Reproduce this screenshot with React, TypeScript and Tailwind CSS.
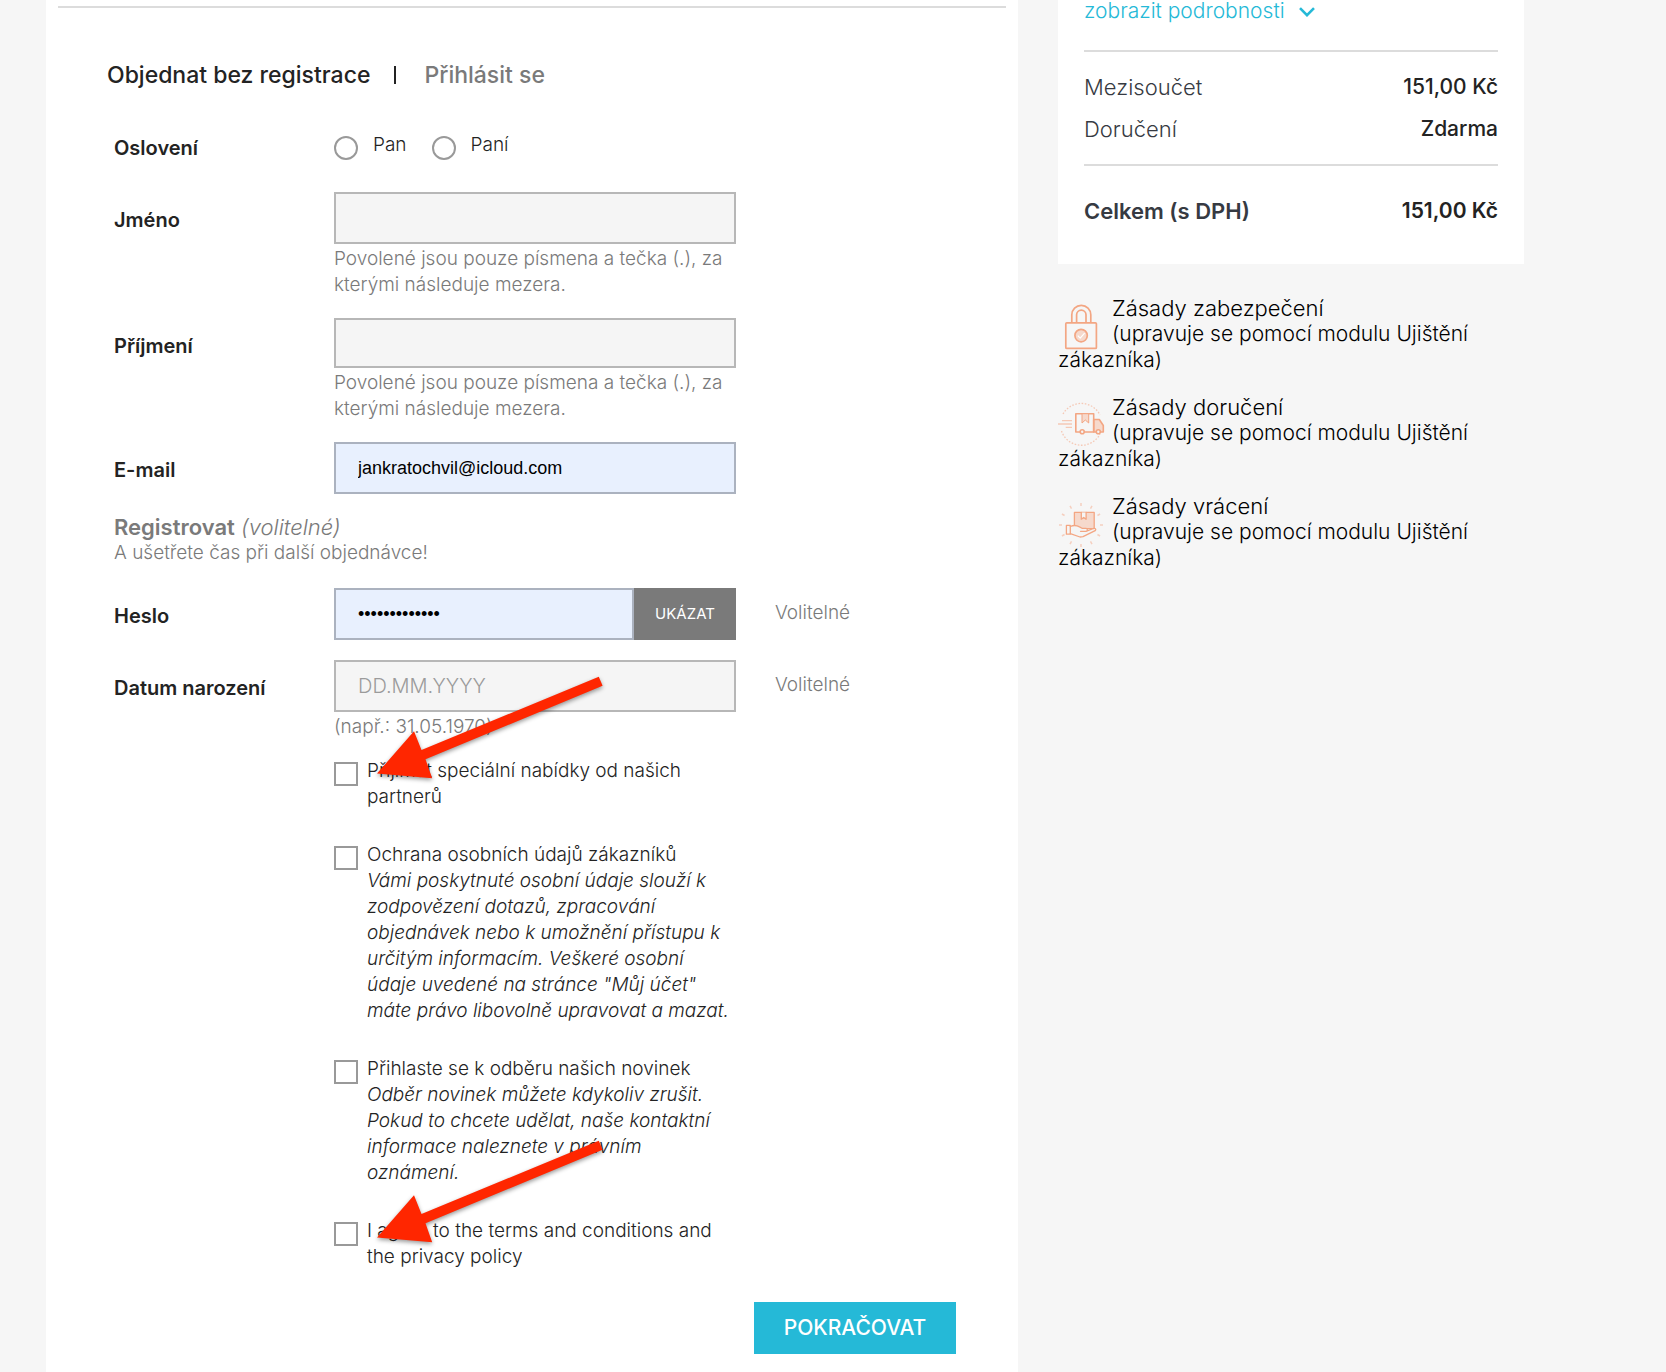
import { useState, type ReactNode } from 'react'

const FIELD = 'block w-full border-2 border-[#b7b7b7] bg-[#f5f5f5] px-[22px] text-[#232323] outline-none'
const FILLED = 'border-2 border-[#abb2bf] bg-[#e8f0fe] px-[22px] font-["Liberation_Sans",sans-serif] text-[18px] text-black outline-none'

function Row({ label, htmlFor, comment, children }: { label: string; htmlFor?: string; comment?: string; children: ReactNode }) {
  return (
    <div className="grid grid-cols-[220px_402fr_220fr] leading-[26px]">
      <label htmlFor={htmlFor} className="pt-[15px] text-[20px] font-semibold text-[#232323]">
        {label}
      </label>
      <div>{children}</div>
      {comment && <div className="pt-3 pl-[39px] text-[19px] font-light text-[#7a7a7a]">{comment}</div>}
    </div>
  )
}

function Hint({ children }: { children: ReactNode }) {
  return <p className="pt-[2px] text-[19px] font-light text-[#7a7a7a]">{children}</p>
}

function Arrow({ className }: { className: string }) {
  return (
    <svg
      viewBox="0 0 226 103"
      aria-hidden="true"
      className={`pointer-events-none absolute left-[43px] h-[103px] w-[226px] overflow-visible drop-shadow-[0_2px_2px_rgba(0,0,0,0.4)] ${className}`}
    >
      <path d="M0 97.5 37 55.3 44.5 74 221.8.7 225.6 9.8 48.5 83.3 55.2 102.3Z" fill="#ff2600" />
    </svg>
  )
}

function Check({ title, note, children }: { title: string; note?: string; children?: ReactNode }) {
  return (
    <div className="relative">
      <label className="flex gap-[9px] text-[19px] leading-[26px] font-light text-[#232323]">
        <input type="checkbox" className="mt-1 size-6 shrink-0 appearance-none border-2 border-[#999] bg-white checked:bg-[#232323]" />
        <span>
          {title}
          {note && <em className="block">{note}</em>}
        </span>
      </label>
      {children}
    </div>
  )
}

function LockIcon() {
  return (
    <g fill="none" stroke="#f3a683" strokeWidth="1.7" strokeLinejoin="round">
      <rect x="7.8" y="23.8" width="30.6" height="25.6" rx="1" />
      <path d="M13.8 23.8v-8a9.5 9.5 0 0 1 19 0v8M18.6 23.8v-8a4.7 4.7 0 0 1 9.4 0v8" />
      <circle cx="23.1" cy="36.6" r="6.2" fill="#f6d9cc" />
      <path d="m19.8 36.6 2.4 2.6 4.4-5" stroke="#fff" strokeWidth="1.2" />
    </g>
  )
}

function TruckIcon() {
  return (
    <g fill="none" stroke="#f3a683" strokeWidth="1.6" strokeLinejoin="round">
      <g stroke="#f5c9b6" strokeWidth="1.3">
        <path d="M5 16a21 21 0 0 1 37 1M3.500 33a21 21 0 0 0 38.500 3" strokeDasharray="1.6 1.6" />
        <path d="M4 22.700h10M0 26h14M7.700 29.300H14" />
      </g>
      <path d="M35.700 21.500h5.600l4 6V34h-9.600z" fill="#f6d9cc" />
      <path d="M17.800 15.700h17.900V34H17.800z" />
      <path d="M24 15.700v9.300l3.300-3 3.400 3v-9.300z" fill="#f6d9cc" strokeWidth="1" />
      <circle cx="24.2" cy="33.8" r="2" fill="#f5f5f5" />
      <circle cx="40.3" cy="33.8" r="2" fill="#f5f5f5" />
    </g>
  )
}

function HandIcon() {
  return (
    <g fill="none" stroke="#f3a683" strokeWidth="1.3" strokeLinejoin="round" strokeLinecap="round">
      <g stroke="#f5cfbf" strokeWidth="1.5" strokeLinecap="butt">
        {[0, 30, 60, 90, 120, 150, 180, 210, 240, 270, 300, 330].map((deg) => (
          <path key={deg} d="M23 6v3" transform={`rotate(${deg} 23 28)`} />
        ))}
      </g>
      <path d="M16.400 15.400h19.800v16.200H16.400z" fill="#f6d9cc" />
      <path d="M23.300 15.400v6.800l2.400-1.800 2.400 1.800v-6.800" fill="#f5f5f5" />
      <path
        d="M12.300 29.500c4-1.800 6.200-1.400 9.200.4l2.500 1.400h4c1.800 0 1.800 3 0 3h-5.500H28l7.500-2.800c1.800-.5 3 1 1.700 2.200L25 39.700l-3 .3-9.700-3.400"
        fill="#f5f5f5"
      />
      <path d="M8.400 28.400h3.900v8.800H8.400z" />
    </g>
  )
}

const policies = [
  { title: 'Zásady zabezpečení', icon: <LockIcon /> },
  { title: 'Zásady doručení', icon: <TruckIcon /> },
  { title: 'Zásady vrácení', icon: <HandIcon /> },
]

function SummaryLine({ label, value }: { label: string; value: string }) {
  return (
    <div className="flex justify-between leading-[42px]">
      <span className="text-[22px] font-light text-[#363a42]">{label}</span>
      <span className="font-medium text-[#232323]">{value}</span>
    </div>
  )
}

export default function App() {
  const [email, setEmail] = useState('jankratochvil@icloud.com')
  const [password, setPassword] = useState('heslo12345678')
  const [visible, setVisible] = useState(false)

  return (
    <div className='grid min-h-screen grid-cols-[972fr_466fr] gap-10 bg-[#f6f6f6] pr-[142px] pl-[46px] font-["Inter",sans-serif]'>
      <main className="bg-white px-3 pt-[6px]">
        <div className="h-[2px] bg-[#dcdcdc]" />

        <div className="flex items-center pt-[52px] pl-[49px] text-[23px] leading-[30px] font-medium">
          <a href="#guest" className="text-[#232323]">Objednat bez registrace</a>
          <span className="mr-7 ml-6 h-[18px] w-[2px] bg-[#232323]" />
          <a href="#login" className="text-[#7a7a7a]">Přihlásit se</a>
        </div>

        <form className="pt-[42px] pr-[50px] pl-[56px]" onSubmit={(e) => e.preventDefault()}>
          <fieldset className="grid grid-cols-[220px_1fr] text-[19px] leading-[26px]">
            <legend className="contents text-[20px] font-semibold text-[#232323]">
              <span className="pt-[3px]">Oslovení</span>
            </legend>
            <div className="flex gap-[25px] font-light text-[#232323]">
              {['Pan', 'Paní'].map((name) => (
                <label key={name} className="flex gap-[15px]">
                  <input
                    type="radio"
                    name="gender"
                    className="mt-[4px] size-6 appearance-none rounded-full border-2 border-[#999] bg-white checked:border-8"
                  />
                  {name}
                </label>
              ))}
            </div>
          </fieldset>

          <div className="mt-[31px] space-y-5">
            <Row label="Jméno" htmlFor="firstname">
              <input id="firstname" className={`${FIELD} h-[52px]`} />
              <Hint>Povolené jsou pouze písmena a tečka (.), za kterými následuje mezera.</Hint>
            </Row>
            <Row label="Příjmení" htmlFor="lastname">
              <input id="lastname" className={`${FIELD} h-[50px]`} />
              <Hint>Povolené jsou pouze písmena a tečka (.), za kterými následuje mezera.</Hint>
            </Row>
            <Row label="E-mail" htmlFor="email">
              <input id="email" type="email" value={email} onChange={(e) => setEmail(e.target.value)} className={`${FILLED} block h-[52px] w-full`} />
            </Row>
          </div>

          <div className="pt-5 pb-[22px] leading-[26px] text-[#7a7a7a]">
            <p className="text-[22px]">
              <span className="font-semibold">Registrovat</span> <em className="font-light">(volitelné)</em>
            </p>
            <p className="text-[19px] font-light">A ušetřete čas při další objednávce!</p>
          </div>

          <div className="space-y-5">
            <Row label="Heslo" htmlFor="password" comment="Volitelné">
              <div className="flex">
                <input
                  id="password"
                  type={visible ? 'text' : 'password'}
                  value={password}
                  onChange={(e) => setPassword(e.target.value)}
                  className={`${FILLED} h-[52px] min-w-0 flex-1`}
                />
                <button type="button" onClick={() => setVisible(!visible)} className="w-[102px] bg-[#7a7a7a] text-[15px] text-white">
                  UKÁZAT
                </button>
              </div>
            </Row>
            <Row label="Datum narození" htmlFor="birthday" comment="Volitelné">
              <input id="birthday" placeholder="DD.MM.YYYY" className={`${FIELD} h-[52px] text-[20px] font-light placeholder:text-[#9b9b9b]`} />
              <Hint>(např.: 31.05.1970)</Hint>
            </Row>
          </div>

          <div className="grid grid-cols-[402fr_220fr] pt-[18px] pl-[220px]">
            <div className="space-y-8">
              <Check title="Přijímat speciální nabídky od našich partnerů">
                <Arrow className="top-[-82px]" />
              </Check>
              <Check
                title="Ochrana osobních údajů zákazníků"
                note={'Vámi poskytnuté osobní údaje slouží k zodpovězení dotazů, zpracování objednávek nebo k umožnění přístupu k určitým informacím. Veškeré osobní údaje uvedené na stránce "Můj účet" máte právo libovolně upravovat a mazat.'}
              />
              <Check
                title="Přihlaste se k odběru našich novinek"
                note="Odběr novinek můžete kdykoliv zrušit. Pokud to chcete udělat, naše kontaktní informace naleznete v právním oznámení."
              />
              <Check title="I agree to the terms and conditions and the privacy policy">
                <Arrow className="top-[-78px]" />
              </Check>
            </div>
          </div>

          <div className="flex justify-end pt-8">
            <button type="submit" className="h-[52px] w-[202px] bg-[#25b9d7] text-[21px] font-medium text-white">
              POKRAČOVAT
            </button>
          </div>
        </form>
      </main>

      <aside>
        <section className="bg-white px-[26px] pb-8 text-[21px]">
          <a href="#details" className="flex items-center gap-[14px] leading-[22px] font-light text-[#25b9d7]">
            zobrazit podrobnosti
            <svg viewBox="0 0 16 10" className="mt-[2px] h-[10px] w-4" fill="none" stroke="currentColor" strokeWidth="2.6" aria-hidden="true">
              <path d="m1 1.200 7 7 7-7" />
            </svg>
          </a>
          <div className="mt-7 border-y-2 border-[#dcdcdc] py-[14px]">
            <SummaryLine label="Mezisoučet" value="151,00 Kč" />
            <SummaryLine label="Doručení" value="Zdarma" />
          </div>
          <div className="mt-6 flex justify-between leading-[42px] font-semibold">
            <span className="text-[22px] text-[#363a42]">Celkem (s DPH)</span>
            <span className="text-[#232323]">151,00 Kč</span>
          </div>
        </section>

        <ul className="space-y-[21px] pt-[31px]">
          {policies.map((p) => (
            <li key={p.title} className="text-[21px] leading-[26px] font-light text-black">
              <svg viewBox="0 0 46 48" aria-hidden="true" className="float-left mt-1 mr-2 h-12 w-[46px] overflow-visible">
                {p.icon}
              </svg>
              <span className="block text-[22px]">{p.title}</span>
              (upravuje se pomocí modulu Ujištění zákazníka)
            </li>
          ))}
        </ul>
      </aside>
    </div>
  )
}
